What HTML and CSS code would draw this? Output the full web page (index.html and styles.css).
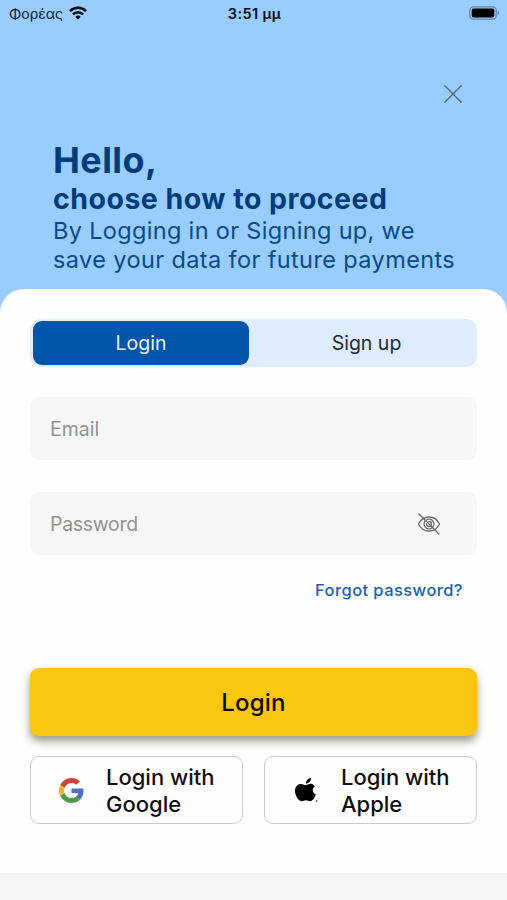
FILE: index.html
```html
<!DOCTYPE html>
<html lang="en">
<head>
<meta charset="utf-8">
<title>Login</title>
<link rel="stylesheet" href="styles.css">
</head>
<body>
<div class="screen">
  <div class="status">
    <div class="carrier"><span>Φορέας</span>
      <svg class="wifi" viewBox="0 0 18 14" fill="none" stroke="#080c10" stroke-width="2.6"><path d="M1 5.1a11.4 11.4 0 0 1 16 0M3.9 8.4a7.2 7.2 0 0 1 10.2 0"/><path d="M9 13.6 6.3 10.9a3.9 3.9 0 0 1 5.4 0z" fill="#080c10" stroke="none"/></svg>
    </div>
    <div class="time">3:51 μμ</div>
    <svg class="battery" viewBox="0 0 31 14"><rect x=".8" y=".8" width="26.4" height="12.4" rx="3.6" fill="none" stroke="#6488ac" stroke-width="1.3"/><rect x="2.7" y="2.6" width="22.6" height="8.8" rx="1.8" fill="#000"/><path d="M28.6 4.6c2.2.8 2.2 4 0 4.8z" fill="#6488ac"/></svg>
  </div>
  <header class="hero">
    <button class="close" aria-label="Close"><svg viewBox="0 0 18 18" stroke="#59636f" stroke-width="1.3" stroke-linecap="round"><path d="M.8.8l16.4 16.4M17.2.8.8 17.2"/></svg></button>
    <h1>Hello,</h1>
    <h2>choose how to proceed</h2>
    <p><span class="line1">By Logging in or Signing up, we</span><br><span class="line2">save your data for future payments</span></p>
  </header>
  <main class="sheet">
    <div class="tabs"><button class="tab active">Login</button><button class="tab">Sign up</button></div>
    <label class="field"><input type="email" placeholder="Email" aria-label="Email"></label>
    <label class="field"><input class="password" type="password" placeholder="Password" aria-label="Password">
      <svg class="eye" viewBox="0 0 24 24" fill="none" stroke="#6c6c6c" stroke-width="1.3" stroke-linecap="round"><path d="M1.5 12C3.6 7.5 7.5 5 12 5s8.4 2.5 10.5 7c-2.1 4.5-6 7-10.5 7s-8.4-2.5-10.5-7z"/><circle cx="12" cy="12" r="4.9"/><path d="M12 9.5a2.5 2.5 0 1 1-2.5 2.5"/><path d="M2 2l20 20"/></svg>
    </label>
    <a class="forgot">Forgot password?</a>
    <button class="submit">Login</button>
    <div class="social">
      <button class="provider">
        <svg class="google" viewBox="0 0 48 48"><path fill="#cf4337" d="M24 9.5c3.54 0 6.71 1.22 9.21 3.6l6.85-6.85C35.9 2.38 30.47 0 24 0 14.62 0 6.51 5.38 2.56 13.22l7.98 6.19C12.43 13.72 17.74 9.5 24 9.5z"/><path fill="#5070bd" d="M46.98 24.55c0-1.57-.15-3.09-.38-4.55H24v9.02h12.94c-.58 2.96-2.26 5.48-4.78 7.18l7.73 6c4.51-4.18 7.09-10.36 7.09-17.65z"/><path fill="#e9b22d" d="M10.53 28.59A14.5 14.5 0 0 1 9.77 24c0-1.6.27-3.14.76-4.59l-7.98-6.19A24 24 0 0 0 0 24c0 3.88.92 7.54 2.56 10.78z"/><path fill="#50994b" d="M24 48c6.48 0 11.93-2.13 15.89-5.81l-7.73-6C30.01 37.64 27.24 38.5 24 38.5c-6.26 0-11.57-4.22-13.47-9.91l-7.98 6.19C6.51 42.62 14.62 48 24 48z"/></svg>
        <span>Login with<br>Google</span>
      </button>
      <button class="provider second">
        <svg class="apple" viewBox="0 0 24 25"><path d="M16.5 0c.2 2.8-2.2 5.5-5 5.5C11.2 2.9 13.8.2 16.5 0zM20.3 8.4c-2.9 1.8-2.7 6.4 1 7.9-.8 2.6-3 7-5.600 7-1.700 0-2.300-1-4.300-1-1.900 0-2.600 1-4.200 1C4.200 23.300.5 17.700.5 13c0-4.600 2.900-7 5.800-7 1.900 0 3.400 1.200 4.600 1.200s3-1.400 5.200-1.400c1 0 3 .4 4.200 2.600z"/><circle cx="22.3" cy="23" r=".8"/></svg>
        <span>Login with<br>Apple</span>
      </button>
    </div>
  </main>
  <div class="footer"></div>
</div>
</body>
</html>
```
FILE: styles.css
```css
* { box-sizing: border-box; }
body { margin: 0; font-family: Inter, "Liberation Sans", sans-serif; background: #fefefe; }
button { font: inherit; border: 0; padding: 0; background: none; color: inherit; }
svg { display: block; flex: none; }
.screen { width: 507px; height: 900px; display: flex; flex-direction: column; background: #99ccff; overflow: hidden; }
.status { height: 28px; display: grid; grid-template-columns: 1fr auto 1fr; align-items: center; padding: 0 7px 2px 9px; color: #0b1a2a; font-size: 14px; }
.carrier { display: flex; align-items: center; gap: 6px; }
.wifi { width: 18px; height: 14px; margin-top: -1px; }
.time { font-size: 14.5px; font-weight: 600; letter-spacing: .4px; color: #071019; }
.battery { width: 31px; height: 14px; justify-self: end; }
.hero { height: 261px; padding: 57px 45px 0 53px; display: flex; flex-direction: column; color: #003c7a; white-space: nowrap; }
.close { align-self: flex-end; width: 18px; height: 18px; }
.hero h1 { margin: 36px 0 0; font-size: 36px; line-height: 43px; font-weight: 700; letter-spacing: .4px; }
.hero h2 { margin: 0; font-size: 28.5px; line-height: 34px; font-weight: 700; letter-spacing: .48px; }
.hero p { margin: 0; font-size: 23.5px; line-height: 29px; letter-spacing: .39px; color: #0b4a86; }
.line1 { letter-spacing: .33px; }
.sheet { height: 584px; padding: 30px 30px 0; background: #fefefe; border-radius: 24px 24px 0 0; display: flex; flex-direction: column; }
.tabs { height: 48px; padding: 2px 3px; display: grid; grid-template-columns: 216px 1fr; background: #deedfe; border-radius: 11px; margin-bottom: 30px; font-size: 19.5px; color: #1d2a36; }
.tab { padding: 0 0 0 10px; }
.tab.active { padding-left: 0; background: #0054a9; color: #e4effb; border-radius: 9px; }
.field { height: 63px; margin-bottom: 32px; padding: 0 36px 0 20px; display: flex; align-items: center; background: #f6f6f6; border-radius: 9px; }
.field input { flex: 1; min-width: 0; border: 0; padding: 1px 0 0; background: none; outline: 0; font: 19.5px Inter, sans-serif; }
.field .password { letter-spacing: -.3px; }
.field input::placeholder { color: #929292; opacity: 1; }
.eye { width: 24px; height: 24px; }
.forgot { align-self: flex-end; margin: -8px 14px 0 0; height: 22px; line-height: 22px; font-size: 16.5px; font-weight: 500; letter-spacing: .42px; color: #1c61ac; }
.submit { margin-top: 67px; height: 68px; flex: none; border-radius: 9px; background: #fbc60f; color: #0c0a02; font-size: 24px; font-weight: 500; letter-spacing: .2px; box-shadow: 0 5px 9px rgba(50, 50, 20, .5); }
.social { margin-top: 20px; display: grid; grid-template-columns: 213px 213px; justify-content: space-between; }
.provider { height: 68px; padding: 1px 0 0 28px; display: flex; align-items: center; border: 1px solid #cbcbcb; border-radius: 9px; background: #fefefe; text-align: left; font-size: 22px; line-height: 27px; font-weight: 500; color: #101010; white-space: nowrap; }
.provider.second { padding-left: 29px; }
.google, .apple { width: 25px; height: 25px; margin-right: 22px; }
.footer { flex: 1; background: #f5f5f5; }
```
